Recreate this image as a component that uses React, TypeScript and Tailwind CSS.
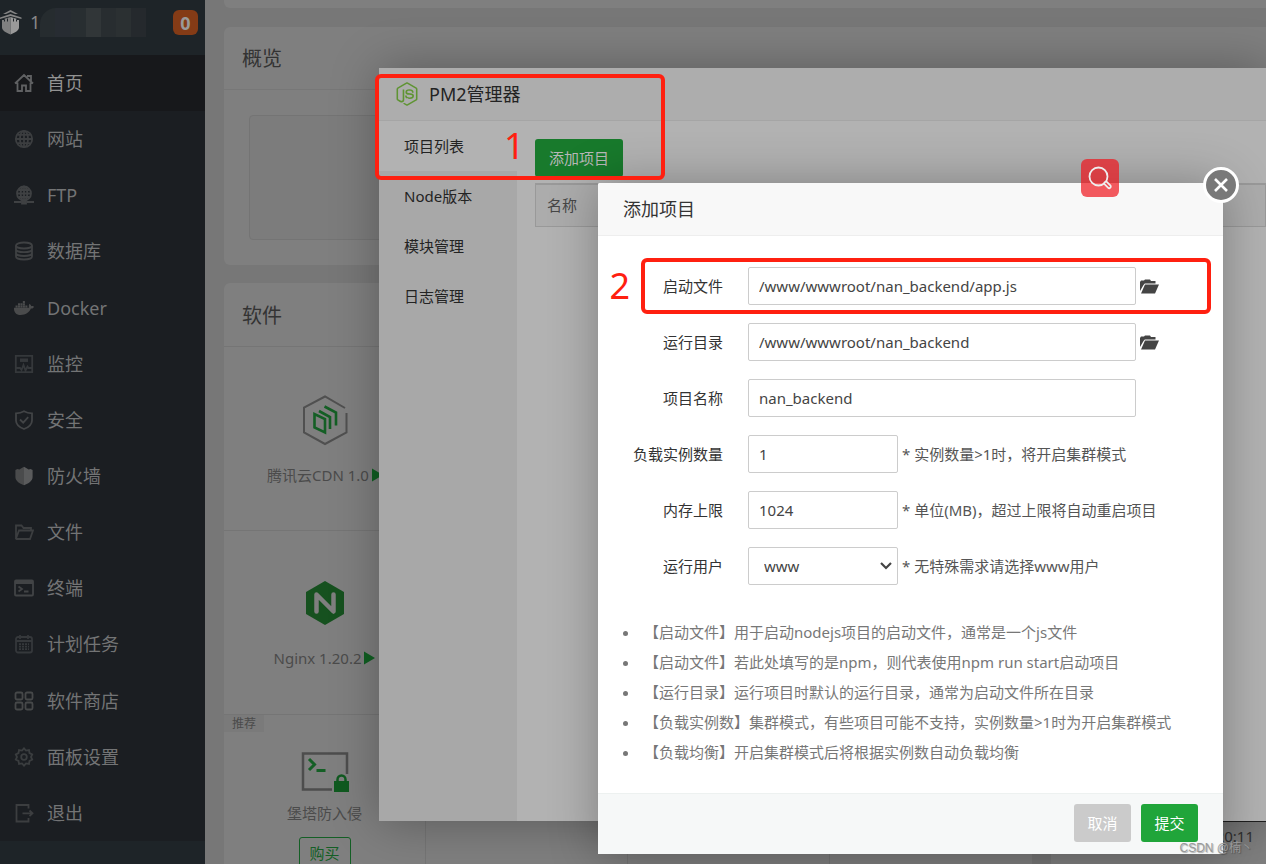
import type { ReactNode } from "react";
import { FaDocker, FaNodeJs } from "react-icons/fa";

type IconProps = { children: ReactNode };

function MenuSvg({ children }: IconProps) {
  return (
    <svg viewBox="0 0 20 20" className="h-5 w-5 shrink-0" fill="none" stroke="currentColor" strokeWidth="1.800" aria-hidden="true">
      {children}
    </svg>
  );
}

const menuItems: { label: string; tone: string; icon: ReactNode }[] = [
  {
    label: "首页",
    tone: "text-[#606163]",
    icon: (
      <MenuSvg>
        <path d="M1 10.5 10 2l9 8.500M13 3h4v5M3.500 9.500V18H8v-5.500h4V18h4.500V9.500" />
      </MenuSvg>
    ),
  },
  {
    label: "网站",
    tone: "text-[#3c3e40]",
    icon: (
      <MenuSvg>
        <circle cx="10" cy="10" r="8.200" />
        <ellipse cx="10" cy="10" rx="4" ry="8.200" />
        <path d="M10 2v16M2 10h16M3.500 5.800h13M3.500 14.200h13" />
      </MenuSvg>
    ),
  },
  {
    label: "FTP",
    tone: "text-[#3f4143]",
    icon: (
      <MenuSvg>
        <circle cx="10" cy="8.500" r="7" />
        <ellipse cx="10" cy="8.500" rx="3.300" ry="7" />
        <path d="M10 1.500v14M3 8.500h14M4.500 5h11M4.500 12h11" />
        <path d="M0 17h7.500M12.500 17H20" />
        <path d="M8 15.500h4v3H8z" fill="currentColor" />
      </MenuSvg>
    ),
  },
  {
    label: "数据库",
    tone: "text-[#3f4143]",
    icon: (
      <MenuSvg>
        <ellipse cx="10" cy="4.500" rx="8" ry="3" />
        <path d="M2 4.500v11c0 1.700 3.600 3 8 3s8-1.300 8-3v-11M2 8.200c0 1.700 3.600 3 8 3s8-1.300 8-3M2 12c0 1.700 3.600 3 8 3s8-1.300 8-3" />
      </MenuSvg>
    ),
  },
  { label: "Docker", tone: "text-[#4a4b4c]", icon: <FaDocker className="h-5 w-5 shrink-0" /> },
  {
    label: "监控",
    tone: "text-[#35383b]",
    icon: (
      <MenuSvg>
        <path d="M1.800 1.800h16.400v16.400H1.800zM2 14h4l1.500 2 2-5 2 5.500 2-4 1 1.500H18" />
        <path d="M6 6.200h8" strokeWidth="3.500" />
      </MenuSvg>
    ),
  },
  {
    label: "安全",
    tone: "text-[#424446]",
    icon: (
      <MenuSvg>
        <path d="M10 1.200c2.300 1.300 5 2 8 2.200v7c0 4-3.500 6.800-8 8.600-4.500-1.800-8-4.600-8-8.600v-7c3-.2 5.700-.9 8-2.200Z" />
        <path d="m6 9.500 3.200 3.200 5-5.500" />
      </MenuSvg>
    ),
  },
  {
    label: "防火墙",
    tone: "text-[#4a4b4c]",
    icon: (
      <MenuSvg>
        <path d="M10 .8v18.500c-4.600-1.700-8.600-4.500-8.600-8.300V4l2-1 2 .5 2-1.200z" fill="#4a4b4c" stroke="none" />
        <path d="M10 .8v18.500c4.600-1.700 8.600-4.500 8.600-8.300V4l-2-1-2 .5-2-1.200z" fill="#5a5b5c" stroke="none" />
      </MenuSvg>
    ),
  },
  {
    label: "文件",
    tone: "text-[#3c3e40]",
    icon: (
      <MenuSvg>
        <path d="M2 16.500V3.500h5.500l2 2.500H17v2.500M2 16.500 5 8.500h14l-3 8.500H2.500Z" />
      </MenuSvg>
    ),
  },
  {
    label: "终端",
    tone: "text-[#424446]",
    icon: (
      <MenuSvg>
        <rect x="1" y="2.500" width="18" height="15" rx="1" />
        <path d="M1 4.500h18" strokeWidth="3" />
        <path d="m4.500 8.500 3.500 2.500-3.500 2.500M10 13.500h4.500" />
      </MenuSvg>
    ),
  },
  {
    label: "计划任务",
    tone: "text-[#35383b]",
    icon: (
      <MenuSvg>
        <rect x="2" y="3" width="16" height="15.500" rx="2" />
        <path d="M2 7h16M6 1v4M14 1v4" />
        <path d="M5 10.200h10M5 12.700h10M5 15.200h10" strokeDasharray="2 1" />
      </MenuSvg>
    ),
  },
  {
    label: "软件商店",
    tone: "text-[#464849]",
    icon: (
      <MenuSvg>
        <rect x="1.500" y="1.500" width="7" height="7" rx="1.500" />
        <rect x="11.500" y="1.500" width="7" height="7" rx="1.500" />
        <rect x="1.500" y="11.500" width="7" height="7" rx="1.500" />
        <rect x="11.500" y="11.500" width="7" height="7" rx="1.500" />
      </MenuSvg>
    ),
  },
  {
    label: "面板设置",
    tone: "text-[#3a3d3f]",
    icon: (
      <MenuSvg>
        <path d="m10 1.300 2 2.300 3-.6.500 3.100 2.700 1.400L17 10l1.200 2.500-2.700 1.400-.5 3.100-3-.6-2 2.300-2-2.300-3 .6-.5-3.100-2.700-1.400L3 10 1.800 7.500l2.700-1.400L5 3l3 .6z" />
        <circle cx="10" cy="10" r="2.800" />
      </MenuSvg>
    ),
  },
  {
    label: "退出",
    tone: "text-[#3c3e40]",
    icon: (
      <MenuSvg>
        <path d="M14.500 5.500V2h-12v16.500h12V15M8.500 10.300H18M15.500 7.500l3 2.800-3 2.800" />
      </MenuSvg>
    ),
  },
];

const windowTabs = ["项目列表", "Node版本", "模块管理", "日志管理"];

const notes = [
  "【启动文件】用于启动nodejs项目的启动文件，通常是一个js文件",
  "【启动文件】若此处填写的是npm，则代表使用npm run start启动项目",
  "【运行目录】运行项目时默认的运行目录，通常为启动文件所在目录",
  "【负载实例数】集群模式，有些项目可能不支持，实例数量>1时为开启集群模式",
  "【负载均衡】开启集群模式后将根据实例数自动负载均衡",
];

function Sidebar() {
  return (
    <aside className="flex w-[205px] shrink-0 flex-col bg-[#1e2428]">
      <div className="flex h-[55px] shrink-0 items-start pt-2">
        <svg viewBox="0 0 22 25" className="mt-[2px] h-[25px] w-[22px]" aria-hidden="true">
          <path d="M10.500 0 18 4h-3l-4.500-2L6 4H3zM10.500 4 21.500 7.500v1.500L10.500 6 0 9V7.500z" fill="#858585" />
          <path d="M2 10h2.500V8.800L10.500 7v17.500C6 22.500 2 20.500 2 17.500z" fill="#808080" />
          <path d="M19 10h-2.500V8.800L10.500 7v17.500c4.500-2 8.500-4 8.500-7z" fill="#9a9a9a" />
          <path d="M4.500 9.500v2M7.500 8.500v3M13.500 8.500v3M16.500 9.500v2" stroke="#1e2428" />
        </svg>
        <span className="ml-2 text-lg leading-7 text-[#888]">1</span>
        <div className="flex h-[29px] w-[106px] overflow-hidden rounded-tl-2xl">
          <span className="w-4 bg-[#262c2f]" />
          <span className="w-4 bg-[#272c32]" />
          <span className="w-4 bg-[#282e31]" />
          <span className="w-4 bg-[#313638]" />
          <span className="w-4 bg-[#282d30]" />
          <span className="w-4 bg-[#2b3032]" />
          <span className="w-4 bg-[#25292d]" />
        </div>
        <span className="mt-[2px] mr-[7px] ml-auto flex h-[25px] w-[25px] items-center justify-center rounded-md bg-[#843b16] text-lg font-bold text-[#999]">
          0
        </span>
      </div>
      <nav className="flex flex-1 flex-col bg-[#1b1e22]">
        {menuItems.map((item, i) => (
          <a
            key={item.label}
            href="#"
            className={`flex flex-1 items-center gap-[13px] pl-[14px] text-lg leading-6 ${i === 0 ? "bg-[#17181b] text-[#929292]" : "text-[#737475]"}`}
          >
            <span className={item.tone}>{item.icon}</span>
            {item.label}
          </a>
        ))}
      </nav>
      <div className="h-[23px] shrink-0" />
    </aside>
  );
}

function PlayMark() {
  return (
    <svg viewBox="0 0 12 14" className="h-[14px] w-3" fill="#105f22" aria-hidden="true">
      <path d="M1 0.500 12 7 1 13.500z" />
    </svg>
  );
}

function Dashboard() {
  return (
    <main className="flex min-w-0 flex-1 flex-col bg-[#777] pl-[19px]">
      <div className="h-2 shrink-0 rounded-bl-md bg-[#7f7f7f]" />
      <section className="mt-[19px] h-[238px] shrink-0 rounded-l-md bg-[#7f7f7f]">
        <h2 className="flex h-[63px] items-center border-b border-[#777] pt-[2px] pl-[18px] text-xl text-[#333]">概览</h2>
        <div className="mx-[25px] mt-[25px] h-[125px] rounded-sm border border-[#747474] bg-[#7c7c7c]" />
      </section>
      <div className="mt-[18px] flex flex-1 gap-[19px]">
        <section className="flex flex-[4] flex-col rounded-t-md bg-[#7f7f7f]">
          <h2 className="flex h-16 shrink-0 items-center border-b border-[#757575] pt-[2px] pl-[18px] text-xl text-[#333]">软件</h2>
          <div className="grid grid-cols-4 text-[15px] text-[#4b4b4b]">
            <div className="flex h-[184px] flex-col items-center border-b border-[#757575] pt-[47px]">
              <svg viewBox="0 0 46 52" className="h-[52px] w-[46px]" fill="none" strokeWidth="2" aria-hidden="true">
                <path d="M43 14 23 2.500 2 13.500v25L23 50l21.500-11.500V19" stroke="#505050" />
                <path d="M12.500 20v13.500l10.500 5V25z" stroke="#145f25" strokeWidth="2.600" />
                <path d="m17 17 11 6v12M22.500 12.500 34 18.500v13" stroke="#145f25" strokeWidth="2.600" />
              </svg>
              <span className="mt-[17px] flex items-center gap-[2px] leading-6 whitespace-nowrap">
                腾讯云CDN 1.0<PlayMark />
              </span>
            </div>
            <div className="border-b border-[#757575]" />
            <div className="border-b border-[#757575]" />
            <div className="border-b border-[#757575]" />
            <div className="flex h-[184px] flex-col items-center border-r border-b border-[#757575] pt-[50px]">
              <svg viewBox="0 0 40 44" className="h-11 w-10" aria-hidden="true">
                <path d="m20 0 19 11v22L20 44 1 33V11z" fill="#16511f" />
                <path d="M11.500 30.500v-17L28.500 30.500v-17" fill="none" stroke="#7f7f7f" strokeWidth="4.500" strokeLinecap="round" strokeLinejoin="round" />
              </svg>
              <span className="mt-[21px] flex items-center gap-[2px] leading-6 whitespace-nowrap">
                Nginx 1.20.2<PlayMark />
              </span>
            </div>
            <div className="border-b border-[#757575]" />
            <div className="border-b border-[#757575]" />
            <div className="border-b border-[#757575]" />
            <div className="flex flex-col items-center border-r border-[#757575]">
              <span className="self-start bg-[#7a7a7a] px-2 text-xs leading-[17px]">推荐</span>
              <svg viewBox="0 0 48 40" className="mt-5 h-10 w-12" fill="none" aria-hidden="true">
                <path d="M31 37.500H2v-36h44V22" stroke="#4d4d4d" strokeWidth="2.500" />
                <path d="m8 7 5.500 5.500L8 18M15.500 18.500h9" stroke="#145f25" strokeWidth="3" />
                <path d="M33 29h15v11H33z" fill="#105a20" />
                <path d="M36.500 30v-2.500a4 4 0 0 1 8 0V30" stroke="#105a20" strokeWidth="2.500" />
              </svg>
              <span className="mt-[9px] leading-6">堡塔防入侵</span>
              <button className="mt-3 h-8 w-[52px] rounded-[3px] border border-[#145f25] text-[15px] text-[#145f25]">购买</button>
            </div>
            <div className="border-r border-[#757575]" />
            <div className="border-r border-[#757575]" />
          </div>
        </section>
        <section className="flex w-[215px] flex-col items-end rounded-tl-md bg-[#7f7f7f] pt-[537px] text-[15px] leading-5 text-[#333]">
          <span className="w-full border-t-2 border-[#222] pt-1 pr-3 text-right">20:11</span>
        </section>
      </div>
    </main>
  );
}

function ManagerWindow() {
  return (
    <section className="absolute top-[68px] right-0 bottom-[43px] left-[379px] flex flex-col rounded-tl-[2px] bg-[#b2b2b2] shadow-[1px_1px_50px_rgba(0,0,0,0.3)]">
      <header className="flex h-[53px] shrink-0 items-center gap-[10px] border-b border-[#a5a5a5] bg-[#adadad] pl-4 text-lg text-[#232323]">
        <FaNodeJs className="h-6 w-6 text-[#5f9433]" />
        PM2管理器
      </header>
      <div className="flex flex-1">
        <div className="w-[138px] shrink-0 bg-[#a8a8a8]">
          {windowTabs.map((tab, i) => (
            <button
              key={tab}
              className={`block h-[50px] w-full pl-[25px] text-left text-[15px] text-[#232323] ${i === 0 ? "bg-[#b2b2b2]" : ""}`}
            >
              {tab}
            </button>
          ))}
        </div>
        <div className="min-w-0 flex-1 pt-[18px] pl-[18px]">
          <button className="h-[38px] rounded-[3px] bg-[#187a2c] px-[14px] text-[15px] text-[#b8b8b8]">添加项目</button>
          <table className="mt-[6px] w-full border border-t-2 border-[#999] bg-[#acacac] text-left text-[15px] text-[#474747]">
            <thead>
              <tr>
                <th className="h-[42px] px-[11px] font-normal">名称</th>
              </tr>
            </thead>
          </table>
        </div>
      </div>
    </section>
  );
}

function FolderButton({ label }: { label: string }) {
  return (
    <button type="button" aria-label={label} className="ml-1">
      <svg viewBox="0 0 19 15" className="h-[15px] w-[19px]" fill="#444" aria-hidden="true">
        <path d="M0 12V3l1-1.500h3L5 .500h5l1 1.500h4.500v2.500H4.800L3.500 6z" />
        <path d="M5 5.500h14L15 14.500H1z" />
      </svg>
    </button>
  );
}

function Field({ id, label, children }: { id: string; label: string; children: ReactNode }) {
  return (
    <div className="flex h-[38px] items-center">
      <label htmlFor={id} className="mr-[25px] w-[125px] shrink-0 text-right text-[#333]">
        {label}
      </label>
      {children}
    </div>
  );
}

const inputClass = "h-full rounded-[2px] border border-[#ccc] bg-white px-[10px] text-[#444] outline-none";

function AddProjectDialog() {
  return (
    <div role="dialog" aria-label="添加项目" className="absolute top-[183px] right-[43px] w-[625px] rounded-[2px] bg-white text-[15px] shadow-[1px_1px_50px_rgba(0,0,0,0.3)]">
      <h3 className="flex h-[53px] items-center rounded-t-[2px] border-b border-[#eee] bg-[#f8f8f8] px-[25px] text-lg text-[#333]">添加项目</h3>
      <button aria-label="关闭" className="absolute -top-4 -right-4 flex h-9 w-9 items-center justify-center rounded-full border-[3px] border-white bg-[#797979]">
        <svg viewBox="0 0 14 14" className="h-[14px] w-[14px]" stroke="#fff" strokeWidth="2.600" aria-hidden="true">
          <path d="m1 1 12 12M13 1 1 13" />
        </svg>
      </button>
      <form className="flex flex-col gap-[18px] pt-[31px] text-[#555]">
        <Field id="file" label="启动文件">
          <input id="file" className={`${inputClass} w-[388px]`} defaultValue="/www/wwwroot/nan_backend/app.js" />
          <FolderButton label="选择启动文件" />
        </Field>
        <Field id="dir" label="运行目录">
          <input id="dir" className={`${inputClass} w-[388px]`} defaultValue="/www/wwwroot/nan_backend" />
          <FolderButton label="选择运行目录" />
        </Field>
        <Field id="name" label="项目名称">
          <input id="name" className={`${inputClass} w-[388px]`} defaultValue="nan_backend" />
        </Field>
        <Field id="count" label="负载实例数量">
          <input id="count" className={`${inputClass} w-[150px]`} defaultValue="1" />
          <span className="ml-1">* 实例数量&gt;1时，将开启集群模式</span>
        </Field>
        <Field id="memory" label="内存上限">
          <input id="memory" className={`${inputClass} w-[150px]`} defaultValue="1024" />
          <span className="ml-1">* 单位(MB)，超过上限将自动重启项目</span>
        </Field>
        <Field id="user" label="运行用户">
          <div className="relative h-full w-[150px]">
            <select id="user" className="h-full w-full appearance-none rounded-[2px] border border-[#ccc] bg-white pl-[15px] text-[#444]">
              <option>www</option>
              <option>root</option>
            </select>
            <svg viewBox="0 0 12 8" className="pointer-events-none absolute top-[15px] right-[6px] h-2 w-3" fill="none" stroke="#444" strokeWidth="2.200" aria-hidden="true">
              <path d="m1 1 5 5 5-5" />
            </svg>
          </div>
          <span className="ml-1">* 无特殊需求请选择www用户</span>
        </Field>
      </form>
      <ul className="mt-8 ml-[42px] list-disc pb-[26px] leading-[30px] text-[#777]">
        {notes.map((note) => (
          <li key={note} className="pl-1">
            {note}
          </li>
        ))}
      </ul>
      <footer className="flex justify-end gap-[10px] border-t border-[#edf1f0] bg-[#f6f8f8] px-[25px] pt-[10px] pb-3 text-white">
        <button className="h-[38px] w-[57px] rounded-[3px] bg-[#cbcbcb]">取消</button>
        <button className="h-[38px] w-[57px] rounded-[3px] bg-[#20a53a]">提交</button>
      </footer>
    </div>
  );
}

export default function App() {
  return (
    <div className="relative flex h-screen overflow-hidden font-['Noto_Sans','Noto_Sans_CJK_SC',sans-serif]">
      <Sidebar />
      <Dashboard />
      <ManagerWindow />
      <AddProjectDialog />

      {/* image search badge */}
      <button aria-label="搜索" className="absolute top-[159px] right-[147px] flex h-[38px] w-[38px] items-center justify-center rounded-md bg-[#ef161c]/70">
        <svg viewBox="0 0 24 24" className="h-6 w-6" fill="none" stroke="#eee" strokeWidth="1.800" aria-hidden="true">
          <circle cx="10.500" cy="10.500" r="9" />
          <path d="m16.500 16.500 1.800-1.200 4 4a1.500 1.500 0 0 1-2.300 2.300l-3.800-3.800z" fill="#ef4a50" />
        </svg>
      </button>

      {/* step marks */}
      <div className="pointer-events-none absolute top-[74px] left-[375px] h-[106px] w-[290px] rounded-md border-4 border-[#ff2010]" />
      <span className="absolute top-[122px] left-[504px] text-[36px] leading-[48px] text-[#ff2010]">1</span>
      <div className="pointer-events-none absolute top-[258px] right-[55px] h-[56px] w-[570px] rounded-md border-4 border-[#ff2010]" />
      <span className="absolute top-[262px] right-[636px] text-[36px] leading-[48px] text-[#ff2010]">2</span>

      <span className="absolute right-[13px] bottom-2 font-['Liberation_Sans','Noto_Sans_CJK_SC',sans-serif] text-xs leading-4 text-[#999] text-shadow-[1px_1px_1px_rgba(0,0,0,0.3)]">
        CSDN @楠丶
      </span>
    </div>
  );
}
